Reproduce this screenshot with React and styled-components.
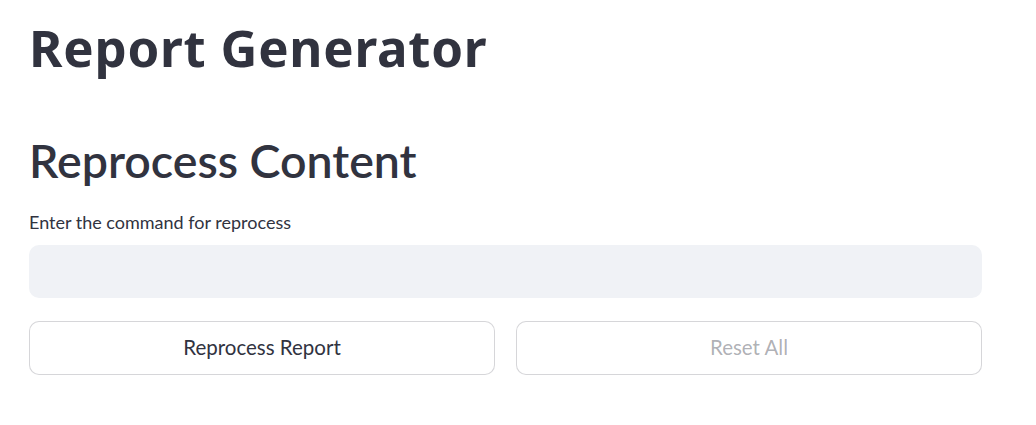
import React from 'react';
import styled, { createGlobalStyle } from 'styled-components';

const Global = createGlobalStyle`
  body {
    margin: 0;
    background: #ffffff;
    font-family: Lato, "Source Sans Pro", sans-serif;
    color: #31333f;
  }
`;

const Main = styled.div`
  width: 953px;
  padding: 14px 0 0 29px;
  display: flex;
  flex-direction: column;
`;

const Title = styled.h1`
  margin: 0;
  font-family: "Noto Sans", sans-serif;
  font-size: 51px;
  line-height: 66px;
  font-weight: 700;
  letter-spacing: 0.75px;
  color: #31333f;
`;

const Header = styled.h2`
  margin: 48px 0 0 0;
  font-size: 46.5px;
  line-height: 64px;
  font-weight: 600;
  color: #31333f;
`;

const Label = styled.label`
  margin-top: 18px;
  font-size: 18px;
  line-height: 24px;
`;

const Input = styled.input`
  margin-top: 11px;
  height: 53px;
  box-sizing: border-box;
  border: none;
  border-radius: 10px;
  background: #f0f2f6;
  outline: none;
  padding: 0 16px;
  font-family: inherit;
  font-size: 20px;
`;

const Buttons = styled.div`
  margin-top: 23px;
  display: grid;
  grid-template-columns: 1fr 1fr;
  gap: 21px;
`;

const Button = styled.button`
  height: 54px;
  box-sizing: border-box;
  padding: 0 0 2px;
  background: #ffffff;
  border: 1px solid rgba(49, 51, 63, 0.2);
  border-radius: 10px;
  font-family: inherit;
  font-size: 20.5px;
  color: ${(props) => (props.disabled ? 'rgba(49, 51, 63, 0.4)' : '#31333f')};
  cursor: ${(props) => (props.disabled ? 'not-allowed' : 'pointer')};
`;

export default function App() {
  return (
    <>
      <Global />
      <Main>
        <Title>Report Generator</Title>
        <Header>Reprocess Content</Header>
        <Label>Enter the command for reprocess</Label>
        <Input type="text" />
        <Buttons>
          <Button>Reprocess Report</Button>
          <Button disabled>Reset All</Button>
        </Buttons>
      </Main>
    </>
  );
}
